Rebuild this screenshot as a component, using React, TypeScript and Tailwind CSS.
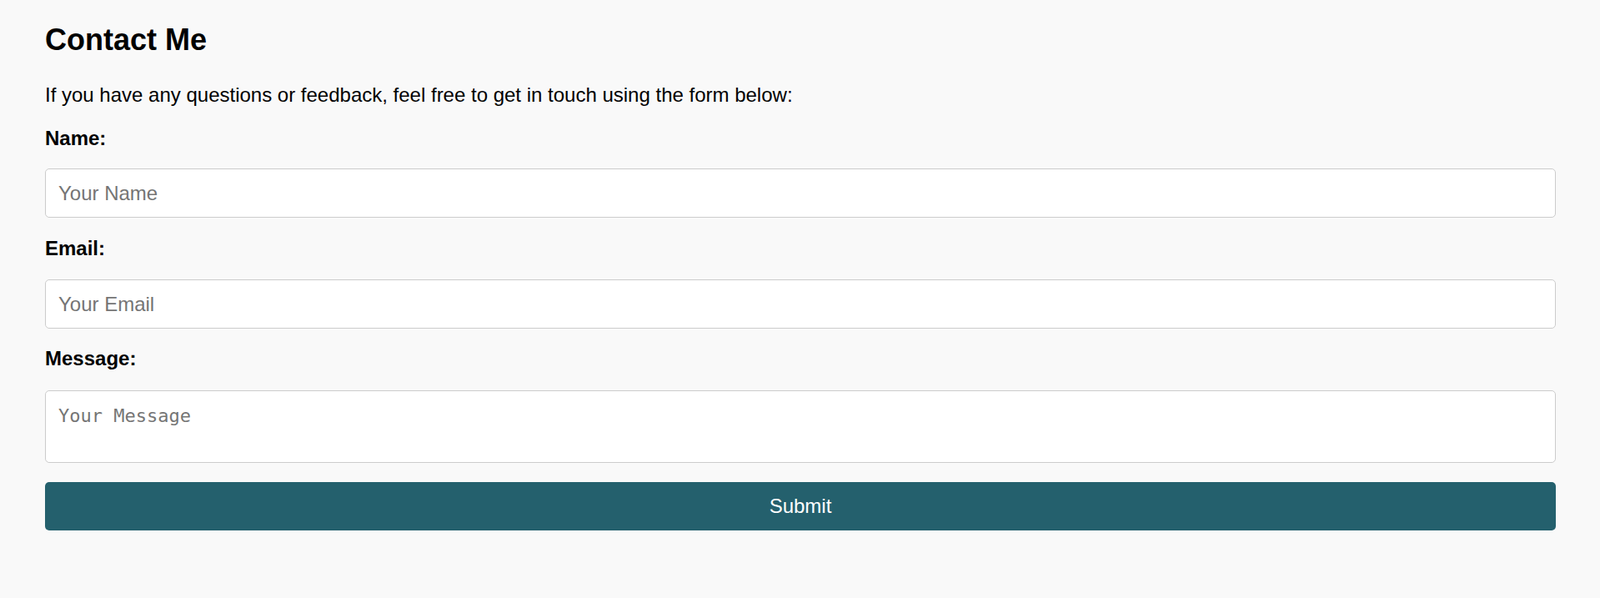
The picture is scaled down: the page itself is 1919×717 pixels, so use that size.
import React, { useState } from "react"

export default function App() {
  const [name, setName] = useState("")
  const [email, setEmail] = useState("")
  const [message, setMessage] = useState("")

  return (
    <div className="min-h-screen bg-[#f9f9f9] pl-[54px] pr-[53px] pt-[28px] pb-[40px] font-['Liberation_Sans',Arial,sans-serif] text-black">
      <h2 className="text-[36px] leading-[40px] font-bold">Contact Me</h2>
      <p className="mt-[32px] text-[24px] leading-[27px]">
        If you have any questions or feedback, feel free to get in touch using the form below:
      </p>

      <form onSubmit={(e) => e.preventDefault()}>
        <label htmlFor="name" className="block mt-[25px] text-[24px] leading-[27px] font-bold">
          Name:
        </label>
        <input
          id="name"
          type="text"
          placeholder="Your Name"
          value={name}
          onChange={(e) => setName(e.target.value)}
          className="block w-full h-[59px] mt-[23px] px-[15px] bg-white border border-[#cccccc] rounded-[5px] text-[24px] text-black placeholder:text-[#757575] outline-none"
        />

        <label htmlFor="email" className="block mt-[23px] text-[24px] leading-[27px] font-bold">
          Email:
        </label>
        <input
          id="email"
          type="email"
          placeholder="Your Email"
          value={email}
          onChange={(e) => setEmail(e.target.value)}
          className="block w-full h-[59px] mt-[24px] px-[15px] bg-white border border-[#cccccc] rounded-[5px] text-[24px] text-black placeholder:text-[#757575] outline-none"
        />

        <label htmlFor="message" className="block mt-[22px] text-[24px] leading-[27px] font-bold">
          Message:
        </label>
        <textarea
          id="message"
          placeholder="Your Message"
          value={message}
          onChange={(e) => setMessage(e.target.value)}
          className="block w-full h-[87px] mt-[25px] px-[15px] pt-[13px] pb-[15px] bg-white border border-[#cccccc] rounded-[5px] resize-none font-['DejaVu_Sans_Mono',monospace] text-[22px] text-black placeholder:text-[#757575] outline-none"
        />

        <button
          type="submit"
          className="block w-full h-[58px] mt-[23px] bg-[#24606d] rounded-[5px] text-white text-[24px]"
        >
          Submit
        </button>
      </form>
    </div>
  )
}
